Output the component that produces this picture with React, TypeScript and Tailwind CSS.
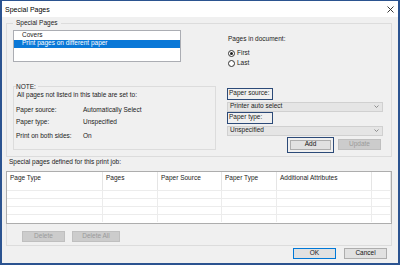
import React from "react";

const font = { fontFamily: '"Liberation Sans", "Noto Sans", sans-serif' };

const Radio = (props: { checked?: boolean; label: string }) => {
  return (
    <div className="flex items-center gap-[2px] h-[10px]">
      <div className="w-[7px] h-[7px] rounded-full border border-[#333] bg-white flex items-center justify-center">
        {props.checked && <div className="w-[3px] h-[3px] rounded-full bg-[#222]"></div>}
      </div>
      <span>{props.label}</span>
    </div>
  );
};

const Select = (props: { value: string }) => {
  return (
    <div className="w-[156px] h-[10px] bg-[#e5e5e5] border border-[#d0d0d0] flex items-center justify-between pl-[2px] pr-[3px] text-[#222]">
      <span>{props.value}</span>
      <svg width="5" height="3" viewBox="0 0 5 3">
        <path d="M0.5 0.5 L2.5 2.5 L4.5 0.5" stroke="#777" strokeWidth="0.8" fill="none" />
      </svg>
    </div>
  );
};

const Button = (props: { label: string; disabled?: boolean; focused?: boolean; w: string }) => {
  if (props.focused) {
    return (
      <div className="border-[1.5px] border-[#2c4a78] p-[2px]">
        <div className={`${props.w} h-[10px] bg-[#e1e1e1] border border-[#adadad] flex items-center justify-center text-[#111]`}>
          {props.label}
        </div>
      </div>
    );
  }
  return (
    <div
      className={`${props.w} h-[11px] flex items-center justify-center border ${
        props.disabled ? "bg-[#cccccc] border-[#bfbfbf] text-[#9a9a9a]" : "bg-[#e1e1e1] border-[#adadad] text-[#111]"
      }`}
    >
      {props.label}
    </div>
  );
};

const Row = (props: { label: string; value: string }) => (
  <div className="flex h-[12px] items-center">
    <span className="w-[67px]">{props.label}</span>
    <span>{props.value}</span>
  </div>
);

const columns = [
  { name: "Page Type", w: "w-[96px]" },
  { name: "Pages", w: "w-[55px]" },
  { name: "Paper Source", w: "w-[64px]" },
  { name: "Paper Type", w: "w-[55px]" },
  { name: "Additional Attributes", w: "w-[95px]" },
  { name: "", w: "flex-1" },
];

export default function App() {
  return (
    <div
      className="w-[400px] h-[265px] border-x-2 border-b-2 border-t border-[#2b5390] flex flex-col text-[6.5px] leading-none text-[#1a1a1a]"
      style={font}
    >
      <div className="h-[16px] bg-white flex items-center justify-between pl-[3px] pr-[4px]">
        <span className="text-[7px] text-black">Special Pages</span>
        <svg width="7" height="7" viewBox="0 0 7 7">
          <path d="M0.5 0.5 L6.5 6.5 M6.5 0.5 L0.5 6.5" stroke="#222" strokeWidth="0.9" />
        </svg>
      </div>
      <div className="flex-1 bg-[#f0f0f0] px-[4px] pt-[3px] flex flex-col">
        <fieldset className="border border-[#dcdcdc] w-[386px] h-[137px] px-[6px]">
          <legend className="px-[3px] text-[#222]">Special Pages</legend>
          <div className="flex pt-[3px] h-[35px]">
            <div className="w-[168px] h-[32px] bg-white border border-[#abadb3] pt-[1px]">
              <div className="h-[8px] flex items-center pl-[8px]">Covers</div>
              <div className="h-[8px] flex items-center pl-[8px] bg-[#0a78d7] text-white">Print pages on different paper</div>
            </div>
            <div className="ml-[47px] pt-[6px]">
              <div className="h-[8px] mb-[5px]">Pages in document:</div>
              <Radio checked label="First" />
              <Radio label="Last" />
            </div>
          </div>
          <div className="flex mt-[22px]">
            <fieldset className="border border-[#dcdcdc] w-[203px] h-[66px] px-[2px]">
              <legend className="pr-[2px]">NOTE:</legend>
              <div className="pt-[2px] pl-[1px] h-[14px]">All pages not listed in this table are set to:</div>
              <Row label="Paper source:" value="Automatically Select" />
              <Row label="Paper type:" value="Unspecified" />
              <div className="h-[2px]"></div>
              <Row label="Print on both sides:" value="On" />
            </fieldset>
            <div className="ml-[11px] pt-[4px] flex flex-col">
              <div className="w-[46px] h-[12px] border-[1.5px] border-[#2c4a78] flex items-center pl-[1px]">Paper source:</div>
              <div className="mt-[2px]">
                <Select value="Printer auto select" />
              </div>
              <div className="w-[46px] h-[12px] border-[1.5px] border-[#2c4a78] flex items-center pl-[1px]">Paper type:</div>
              <div className="mt-[2px]">
                <Select value="Unspecified" />
              </div>
              <div className="flex items-center justify-end gap-[4px] mt-[1px] pr-[2px]">
                <Button label="Add" focused w="w-[41px]" />
                <Button label="Update" disabled w="w-[43px]" />
              </div>
            </div>
          </div>
        </fieldset>
        <div className="h-[9px] flex items-end pl-[3px] pb-[1px]">Special pages defined for this print job:</div>
        <div className="w-[386px] mt-[5px] h-[53px] bg-white border border-[#adadad] flex flex-col">
          <div className="flex h-[18px]">
            {columns.map((c, i) => (
              <div key={i} className={`${c.w} border-r border-[#e5e5e5] pl-[3px] pt-[3px]`}>
                {c.name}
              </div>
            ))}
          </div>
          {[0, 1, 2, 3].map((r) => (
            <div key={r} className="flex h-[8px] border-t border-[#ececec]">
              {columns.map((c, i) => (
                <div key={i} className={`${c.w} border-r border-[#ececec]`}></div>
              ))}
            </div>
          ))}
        </div>
        <div className="w-[386px] h-[22px] border-x border-b border-[#dcdcdc] flex items-end pb-[3px] gap-[7px] pl-[15px]">
          <Button label="Delete" disabled w="w-[43px]" />
          <Button label="Delete All" disabled w="w-[48px]" />
        </div>
        <div className="flex justify-end gap-[8px] pr-[7px] mt-[2px]">
          <div className="w-[43px] h-[11px] bg-[#e1e1e1] border border-[#0078d7] flex items-center justify-center">OK</div>
          <Button label="Cancel" w="w-[43px]" />
        </div>
      </div>
    </div>
  );
}
